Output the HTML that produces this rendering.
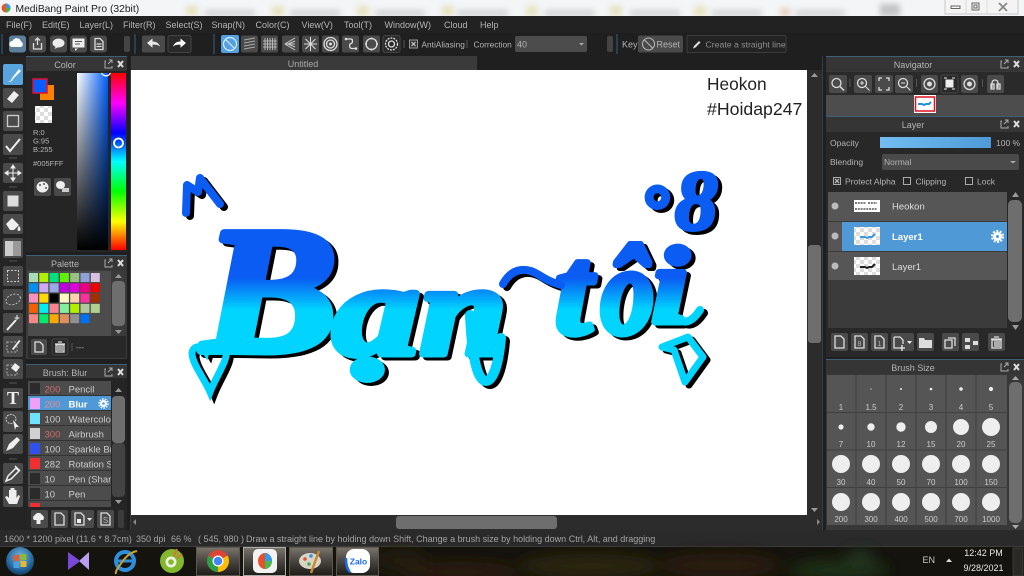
<!DOCTYPE html>
<html><head><meta charset="utf-8"><title>MediBang Paint Pro</title>
<style>
html,body{margin:0;padding:0;width:1024px;height:576px;overflow:hidden;background:#1f1f1f}
svg{display:block}
svg.root{filter:blur(.35px)}
text{font-family:"Liberation Sans",sans-serif;font-size:9px;fill:#b4b4b4}
.c{text-anchor:middle}
.b{fill:#4a4a4a}
.ic{fill:none;stroke:#ddd;stroke-width:1.3}
.f{fill:#ddd}
text.art{font-family:"Liberation Serif",serif;font-weight:bold;font-style:italic}
text.k{fill:#000;stroke:#000;stroke-width:7;stroke-linejoin:round}
text.g{fill:url(#gr);stroke:url(#gr);stroke-width:7;stroke-linejoin:round}
</style></head><body>
<svg class="root" width="1024" height="576" viewBox="0 0 1024 576" xmlns="http://www.w3.org/2000/svg">
<defs>
<linearGradient id="gr" gradientUnits="userSpaceOnUse" x1="0" y1="278" x2="0" y2="310"><stop offset="0" stop-color="#0a5cf2"/><stop offset="1" stop-color="#00d4ff"/></linearGradient>
<linearGradient id="sv1" x1="0" x2="1" y1="0" y2="0"><stop offset="0" stop-color="#fff"/><stop offset="1" stop-color="#005fff"/></linearGradient>
<linearGradient id="sv2" x1="0" x2="0" y1="0" y2="1"><stop offset="0" stop-color="#000" stop-opacity="0"/><stop offset="1" stop-color="#000"/></linearGradient>
<linearGradient id="hue" x1="0" x2="0" y1="0" y2="1"><stop offset="0" stop-color="#f00"/><stop offset=".17" stop-color="#f0f"/><stop offset=".34" stop-color="#00f"/><stop offset=".5" stop-color="#0ff"/><stop offset=".67" stop-color="#0f0"/><stop offset=".84" stop-color="#ff0"/><stop offset="1" stop-color="#f00"/></linearGradient>
<linearGradient id="op" x1="0" x2="1" y1="0" y2="0"><stop offset="0" stop-color="#72bdf2"/><stop offset="1" stop-color="#4f9ad6"/></linearGradient>
<linearGradient id="tb" x1="0" x2="0" y1="0" y2="1"><stop offset="0" stop-color="#7a746c"/><stop offset=".45" stop-color="#4c4842"/><stop offset="1" stop-color="#1e1c18"/></linearGradient>
<radialGradient id="orb" cx=".5" cy=".35" r=".7"><stop offset="0" stop-color="#7ab6dc"/><stop offset=".6" stop-color="#2a6ea4"/><stop offset="1" stop-color="#0c3458"/></radialGradient>
<pattern id="chk" width="8" height="8" patternUnits="userSpaceOnUse"><rect width="8" height="8" fill="#fff"/><rect width="4" height="4" fill="#ddd"/><rect x="4" y="4" width="4" height="4" fill="#ddd"/></pattern>
<filter id="bl" x="-30%" y="-30%" width="160%" height="160%"><feGaussianBlur stdDeviation="3"/></filter>
<filter id="bl2" x="-30%" y="-30%" width="160%" height="160%"><feGaussianBlur stdDeviation="7"/></filter>
</defs>

<!-- Title bar -->
<rect width="1024" height="16" fill="#f3f5f7"/>
<g filter="url(#bl)" opacity=".45"><rect x="186" y="6" width="12" height="10" fill="#d8cf80"/><rect x="272" y="6" width="12" height="10" fill="#d8cf80"/><rect x="357" y="6" width="12" height="10" fill="#d8cf80"/><rect x="442" y="6" width="12" height="10" fill="#d8cf80"/><rect x="526" y="6" width="12" height="10" fill="#d8cf80"/><rect x="610" y="6" width="12" height="10" fill="#d8cf80"/><rect x="694" y="6" width="12" height="10" fill="#d8cf80"/><rect x="780" y="8" width="10" height="8" fill="#e0a080"/><rect x="880" y="4" width="20" height="12" fill="#888"/><rect x="205" y="10" width="50" height="6" fill="#aaa"/><rect x="290" y="10" width="50" height="6" fill="#aaa"/><rect x="375" y="10" width="50" height="6" fill="#aaa"/><rect x="458" y="10" width="50" height="6" fill="#aaa"/><rect x="545" y="10" width="50" height="6" fill="#aaa"/><rect x="630" y="10" width="50" height="6" fill="#aaa"/><rect x="712" y="10" width="50" height="6" fill="#aaa"/><rect x="795" y="10" width="50" height="6" fill="#aaa"/></g>
<circle cx="6" cy="8" r="4.500" fill="#e8562a"/><path d="M6 3.500a4.500 4.500 0 0 1 4.500 4.500H6z" fill="#2f9ee8"/><path d="M6 8h4.500A4.500 4.500 0 0 1 6 12.500z" fill="#3fb34f"/>
<text x="15.500" y="12" style="font-size:10.300px;fill:#222">MediBang Paint Pro (32bit)</text>
<rect x="945" y="-1" width="73" height="15" fill="#f4f4f4" stroke="#c8c8c8"/><path d="M966 -1v15M987 -1v15" stroke="#ddd"/>
<rect x="951" y="6" width="9" height="2.500" fill="none" stroke="#666"/><rect x="972" y="3" width="7" height="7" fill="none" stroke="#666"/><rect x="974" y="5" width="3" height="3" fill="none" stroke="#666"/><path d="M999 3l8 8M1007 3l-8 8" stroke="#888" stroke-width="1.800"/>

<!-- Menu bar -->
<rect y="16" width="1024" height="17" fill="#222"/>
<g style="fill:#bbb"><text x="6" y="28">File(F)</text><text x="42" y="28">Edit(E)</text><text x="79.500" y="28">Layer(L)</text><text x="123" y="28">Filter(R)</text><text x="165.500" y="28">Select(S)</text><text x="211.500" y="28">Snap(N)</text><text x="255.500" y="28">Color(C)</text><text x="301.500" y="28">View(V)</text><text x="344" y="28">Tool(T)</text><text x="384.500" y="28">Window(W)</text><text x="444" y="28">Cloud</text><text x="480" y="28">Help</text></g>

<!-- Toolbar -->
<rect y="33" width="1024" height="22" fill="#1f1f1f"/>
<path d="M2 34v20M135 34v20M214 34v20M617 34v20" stroke="#2d4b63" stroke-width="1.500"/>
<rect x="9" y="35.500" width="17" height="17" rx="3" fill="#5d7f9c"/><path d="M12 47a3 3 0 0 1 .5-6 4.500 4.500 0 0 1 8.500.5 3 3 0 0 1 0 5.500z" fill="#fff"/>
<rect x="29" y="35.500" width="17" height="17" rx="3" class="b"/><path d="M33.500 43v6h8v-6M37.500 45v-7m-2.500 2.500l2.500-2.500 2.500 2.500" class="ic"/>
<rect x="50" y="35.500" width="17" height="17" rx="3" class="b"/><ellipse cx="58.500" cy="43" rx="6" ry="4.500" fill="#eee"/><path d="M56 46l-1.500 3 4-2z" fill="#eee"/>
<rect x="70" y="35.500" width="17" height="17" rx="3" class="b"/><rect x="72.500" y="38.500" width="12" height="9" fill="#eee"/><path d="M75 48.500l0 2.500 3-2.500z" fill="#eee"/><path d="M75 41.500h7M75 44h5" stroke="#555"/>
<rect x="90" y="35.500" width="17" height="17" rx="3" class="b"/><path d="M95 38.500h5l3 3v8h-8zM96.500 44h5M96.500 46.500h5" class="ic"/>
<rect x="124" y="36" width="6" height="16" rx="2" fill="#444"/>
<rect x="142" y="35.500" width="23" height="17" rx="2" class="b"/><path d="M147 43l5.500-4.500v3c4 0 6.500 2 7.500 5-2-1.500-4.500-2-7.500-1.800v3z" fill="#e8e8e8"/>
<rect x="168" y="35.500" width="23" height="17" rx="2" fill="#2a2a2a" stroke="#444"/><path d="M186 43l-5.500-4.500v3c-4 0-6.500 2-7.500 5 2-1.500 4.500-2 7.500-1.800v3z" fill="#fff"/>
<rect x="221" y="35" width="18" height="18" rx="2" fill="#55a0de"/><circle cx="230" cy="44" r="6.500" fill="none" stroke="#d8ecfa" stroke-width="1.200"/><path d="M225.500 39.500l9 9" stroke="#d8ecfa" stroke-width="1.200"/>
<rect x="241" y="35.500" width="17" height="17" rx="2" class="b"/><path d="M244 40l11-2M244 43l11-2M244 46l11-2M244 49l11-2" stroke="#aaa"/>
<rect x="261" y="35.500" width="17" height="17" rx="2" class="b"/><path d="M265 38v12M267.500 38v12M270 38v12M272.500 38v12M275 38v12M263 41h14M263 44h14M263 47h14" stroke="#ccc" stroke-width=".8"/>
<rect x="282" y="35.500" width="17" height="17" rx="2" class="b"/><path d="M295 38l-10 6 10 6M295 41l-7 3 7 3M295 44h-9" stroke="#ccc" fill="none"/>
<rect x="302" y="35.500" width="17" height="17" rx="2" class="b"/><path d="M310.500 37v14M304 44h13M305.500 39l10 10M315.500 39l-10 10" stroke="#ddd"/>
<rect x="322" y="35.500" width="17" height="17" rx="2" class="b"/><circle cx="330.500" cy="44" r="6.500" class="ic" stroke-width=".8"/><circle cx="330.500" cy="44" r="4" class="ic" stroke-width=".8"/><circle cx="330.500" cy="44" r="1.500" class="f"/>
<rect x="342" y="35.500" width="17" height="17" rx="2" class="b"/><path d="M346 39h5c2 0 2 4 0 4.500s-2 5 1 5h4" class="ic"/><circle cx="346" cy="39" r="1.300" class="f"/><circle cx="356" cy="48.500" r="1.300" class="f"/>
<rect x="363" y="35.500" width="17" height="17" rx="2" class="b"/><circle cx="371.500" cy="44" r="5.500" class="ic" stroke-width="1.600"/><circle cx="371.500" cy="38.500" r="1" class="f"/><circle cx="371.500" cy="49.500" r="1" class="f"/><circle cx="366" cy="44" r="1" class="f"/><circle cx="377" cy="44" r="1" class="f"/>
<rect x="383" y="35.500" width="17" height="17" rx="2" fill="#2a2a2a" stroke="#444"/><circle cx="391.500" cy="44" r="6" class="ic" stroke-dasharray="2 1" stroke-width="1.600"/><circle cx="391.500" cy="44" r="3" class="ic" stroke-width=".9"/>
<path d="M404 40v8M467 40v8" stroke="#555"/>
<rect x="409.500" y="40" width="8" height="8" fill="#333" stroke="#999"/><path d="M411.500 42l4 4M415.500 42l-4 4" stroke="#ccc" stroke-width="1.200"/>
<text x="421.500" y="47.500" style="font-size:8.300px">AntiAliasing</text><text x="473.500" y="47.500" style="font-size:8.300px">Correction</text>
<rect x="515" y="36" width="72" height="16" rx="2" fill="#4c4c4c"/><text x="517" y="47.500">40</text><path d="M579 43h5l-2.500 2.500z" fill="#aaa"/>
<rect x="607" y="36" width="6" height="16" rx="2" fill="#444"/>
<text x="622" y="47.500">Key</text>
<rect x="638" y="35.500" width="45" height="17" rx="2" class="b"/><circle cx="648.500" cy="44" r="6" fill="none" stroke="#bbb"/><path d="M644.500 40l8 8" stroke="#bbb"/><text x="656.500" y="47.500">Reset</text>
<rect x="687" y="35.500" width="99" height="17" rx="1" fill="#232323" stroke="#3c3c3c"/><path d="M693 48.500l1-2.500 5-5 1.500 1.500-5 5z" fill="#ddd"/><text x="705.500" y="47.500" style="fill:#8e8e8e;font-size:8.700px">Create a straight line</text>

<!-- Canvas area -->
<rect x="131" y="56" width="346" height="14" fill="#3a3a3a"/>
<text x="303" y="67" class="c" style="fill:#aaa">Untitled</text>
<rect x="131" y="70" width="676" height="445" fill="#fff"/>
<rect x="131" y="515" width="691" height="15" fill="#2c2c2c"/>
<rect x="396" y="516" width="161" height="13" rx="3" fill="#6e6e6e"/>
<path d="M136 519v6l-3-3zM817 519v6l3-3z" fill="#888"/>
<rect x="807" y="70" width="15" height="445" fill="#2c2c2c"/>
<rect x="808" y="245" width="13" height="98" rx="3" fill="#6e6e6e"/>
<path d="M811 77h7l-3.500 -4zM811 508h7l-3.500 4z" fill="#999"/>
<rect x="130" y="70" width="1" height="460" fill="#2d4050"/>
<rect x="822" y="56" width="1" height="474" fill="#2d4050"/>

<!-- Artwork -->
<text x="707" y="90" style="font-size:17.300px;fill:#222">Heokon</text>
<text x="707" y="115" style="font-size:17.700px;fill:#222">#Hoidap247</text>

<g transform="translate(4 3)">
<text class="art k" transform="translate(203 0) scale(1.120 1)" y="351" style="font-size:180px;stroke-width:8px">B</text>
<text class="art k" transform="translate(333 0) scale(1.330 1)" y="354" style="font-size:130px">ạ</text>
<text class="art k" transform="translate(420 0) scale(1.200 1)" y="354" style="font-size:130px">n</text>
<path d="M470 315C472 360 478 381 486 381S499 360 501 338" fill="none" stroke="#000" stroke-width="10" stroke-linecap="round"/>
<text class="art k" transform="translate(555 0) scale(1.050 1)" y="333" style="font-size:125px">t</text>
<text class="art k" transform="translate(601 0) scale(.850 1)" y="333" style="font-size:125px">ô</text>
<text class="art k" transform="translate(652 0) scale(1.200 1)" y="322" style="font-size:108px">i</text>
<path d="M678 318q10 10 22-8" fill="none" stroke="#000" stroke-width="8" stroke-linecap="round"/>
<path d="M503 284c10-18 25-16 36-9s16 8 22 10" fill="none" stroke="#000" stroke-width="8" stroke-linecap="round"/>
<text class="art k" x="675" y="229" style="font-size:85px;stroke-width:4px">8</text>
<text class="art k" x="641" y="232" style="font-size:68px;stroke-width:5px">°</text>
<path d="M186 213L187 185L198 192L200 178L220 204" fill="none" stroke="#000" stroke-width="8" stroke-linecap="round" stroke-linejoin="round"/>
<path d="M210 392c-6-14-17-27-18-38 0-8 9-10 14-2 2-7 14-10 19-4 6 8-9 28-15 44z" fill="none" stroke="#000" stroke-width="7"/>
<path d="M662 347L688 337L703 357L685 382L674 350z" fill="none" stroke="#000" stroke-width="7" stroke-linejoin="round"/>
</g>
<text class="art g" transform="translate(203 0) scale(1.120 1)" y="351" style="font-size:180px;stroke-width:8px">B</text>
<text class="art g" transform="translate(333 0) scale(1.330 1)" y="354" style="font-size:130px">ạ</text>
<text class="art g" transform="translate(420 0) scale(1.200 1)" y="354" style="font-size:130px">n</text>
<path d="M470 315C472 360 478 381 486 381S499 360 501 338" fill="none" stroke="#00d4ff" stroke-width="10" stroke-linecap="round"/>
<text class="art g" transform="translate(555 0) scale(1.050 1)" y="333" style="font-size:125px">t</text>
<text class="art g" transform="translate(601 0) scale(.850 1)" y="333" style="font-size:125px">ô</text>
<text class="art g" transform="translate(652 0) scale(1.200 1)" y="322" style="font-size:108px">i</text>
<path d="M678 318q10 10 22-8" fill="none" stroke="#00d4ff" stroke-width="8" stroke-linecap="round"/>
<path d="M503 284c10-18 25-16 36-9s16 8 22 10" fill="none" stroke="#0a5cf2" stroke-width="8" stroke-linecap="round"/>
<text class="art" x="675" y="229" style="font-size:85px;fill:#0a5cf2;stroke:#0a5cf2;stroke-width:4px">8</text>
<text class="art" x="641" y="232" style="font-size:68px;fill:#0a5cf2;stroke:#0a5cf2;stroke-width:5px">°</text>
<path d="M186 213L187 185L198 192L200 178L220 204" fill="none" stroke="#0a5cf2" stroke-width="8" stroke-linecap="round" stroke-linejoin="round"/>
<path d="M210 392c-6-14-17-27-18-38 0-8 9-10 14-2 2-7 14-10 19-4 6 8-9 28-15 44z" fill="none" stroke="#00d4ff" stroke-width="7"/>
<path d="M662 347L688 337L703 357L685 382L674 350z" fill="none" stroke="#00d4ff" stroke-width="7" stroke-linejoin="round"/>

<!-- Left tools -->
<rect x="0" y="56" width="26" height="474" fill="#242424"/>
<rect x="3" y="64" width="20" height="21" rx="2" fill="#5aa4de"/><path d="M6 82c4 0 5-1 6-4l7-9 2 2-8 8c-1 3-3 3-7 3z" fill="#fff"/>
<rect x="3" y="88" width="20" height="20" rx="2" class="b"/><path d="M7 99l7-8 5 4-7 8z" fill="#eee"/>
<rect x="3" y="111" width="20" height="20" rx="2" class="b"/><rect x="7.500" y="115.500" width="11" height="11" fill="none" stroke="#ccc" stroke-width="1.300"/>
<rect x="3" y="134" width="20" height="21" rx="2" class="b"/><path d="M6 146l4 5 10-12" fill="none" stroke="#eee" stroke-width="2"/>
<path d="M9 158h8M9 187h8M9 261h8M9 383h8M9 459h8" stroke="#555"/>
<rect x="3" y="163" width="20" height="20" rx="2" class="b"/><path d="M13 165v16M5 173h16M13 165l-2 3h4zM13 181l-2-3h4zM5 173l3-2v4zM21 173l-3-2v4z" stroke="#eee" fill="#eee"/>
<rect x="3" y="191" width="20" height="20" rx="2" class="b"/><rect x="7.500" y="195.500" width="11" height="11" fill="#ddd"/>
<rect x="3" y="214" width="20" height="20" rx="2" class="b"/><path d="M6 224l6-6 7 7-5 5h-4zM19 226c2 2 2 5 0 5s-2-3 0-5z" fill="#eee"/>
<rect x="3" y="238" width="20" height="20" rx="2" class="b"/><rect x="5" y="241" width="16" height="15" fill="#999"/><rect x="5" y="241" width="8" height="15" fill="#ccc"/>
<rect x="3" y="266" width="20" height="20" rx="2" class="b"/><rect x="7.500" y="270.500" width="11" height="11" fill="none" stroke="#ccc" stroke-dasharray="2 1.500"/>
<rect x="3" y="289" width="20" height="21" rx="2" class="b"/><ellipse cx="13" cy="299.500" rx="7.500" ry="5" fill="none" stroke="#bbb" stroke-dasharray="2 1.500" transform="rotate(-20 13 299)"/>
<rect x="3" y="313" width="20" height="20" rx="2" class="b"/><path d="M7 330l9-10" stroke="#eee" stroke-width="2"/><path d="M17 315v5M14.500 318h5" stroke="#eee"/>
<rect x="3" y="336" width="20" height="21" rx="2" class="b"/><rect x="7" y="342" width="10" height="10" fill="none" stroke="#aaa" stroke-dasharray="2 1.500"/><path d="M12 349l7-9 1.500 1-7 9z" fill="#eee"/>
<rect x="3" y="359" width="20" height="20" rx="2" class="b"/><rect x="7" y="365" width="10" height="10" fill="none" stroke="#aaa" stroke-dasharray="2 1.500"/><path d="M11 368l4-5 5 4-4 5z" fill="#eee"/>
<rect x="3" y="388" width="20" height="20" rx="2" class="b"/><text x="13" y="404" class="c" style="font-family:'Liberation Serif',serif;font-weight:bold;font-size:18px;fill:#eee">T</text>
<rect x="3" y="411" width="20" height="21" rx="2" class="b"/><ellipse cx="11" cy="419" rx="5" ry="4.500" fill="none" stroke="#ccc" stroke-dasharray="2 1"/><path d="M13 420l6 7-3 0-1 3z" fill="#eee"/>
<rect x="3" y="434" width="20" height="20" rx="2" class="b"/><path d="M6 451l3-7 8-7 3 3-7 8z" fill="#eee"/>
<rect x="3" y="463" width="20" height="21" rx="2" class="b"/><path d="M6 481l2-5 8-8 3 3-8 8zM15 466l5 5" fill="none" stroke="#eee" stroke-width="1.500"/>
<rect x="3" y="486" width="20" height="21" rx="2" class="b"/><path d="M9 504l-4-7 2-1 2 2v-8h1.500v6-8h2v8-8h2v8-6h2v8l2-3 1.500 1-3 8z" fill="#eee"/>

<!-- Color panel -->
<rect x="26" y="56" width="101" height="196" fill="#252525"/>
<rect x="26" y="56" width="101" height="1" fill="#3f5f78"/>
<rect x="26" y="57" width="101" height="14" fill="#363636"/>
<text x="65" y="68" class="c">Color</text>
<path d="M106 61h-1v7h7v-2M109 60h3v3M112 60l-4 4" fill="none" stroke="#aaa"/><path d="M118 61l5 6M123 61l-5 6" stroke="#ddd" stroke-width="2"/>
<rect x="40" y="85" width="14" height="15" fill="#f98200"/>
<rect x="33" y="79" width="14" height="14" fill="#0a5cff" stroke="#e01030" stroke-width="1.500"/>
<rect x="35" y="106" width="17" height="17" fill="url(#chk)"/>
<text x="33" y="135" style="font-size:7.500px">R:0</text><text x="33" y="143.500" style="font-size:7.500px">G:95</text><text x="33" y="152" style="font-size:7.500px">B:255</text>
<text x="33" y="166" style="font-size:7.500px">#005FFF</text>
<rect x="34" y="178" width="17" height="18" rx="2" class="b"/><ellipse cx="42.500" cy="187" rx="6" ry="5.500" fill="#eee"/><circle cx="40" cy="185" r="1" fill="#555"/><circle cx="44" cy="184" r="1" fill="#555"/><circle cx="46" cy="188" r="1" fill="#555"/>
<rect x="54" y="178" width="17" height="18" rx="2" class="b"/><ellipse cx="60.500" cy="185" rx="4.500" ry="4" fill="#eee"/><rect x="62" y="188" width="7" height="4" fill="#ccc"/>
<rect x="77" y="73" width="31" height="177" fill="url(#sv1)"/><rect x="77" y="73" width="31" height="177" fill="url(#sv2)"/>
<path d="M101.500 73a5 5 0 0 0 9 0" fill="none" stroke="#fff" stroke-width="1.300"/>
<rect x="111" y="73" width="15" height="177" fill="url(#hue)"/>
<circle cx="118.500" cy="143" r="4.500" fill="none" stroke="#fff" stroke-width="1.800"/><circle cx="118.500" cy="143" r="6" fill="none" stroke="#1a3a80" stroke-width=".5"/>

<!-- Palette panel -->
<rect x="26" y="255" width="101" height="104" fill="#3a3a3a"/>
<rect x="26" y="255" width="101" height="1" fill="#3f5f78"/>
<rect x="26" y="256" width="101" height="14" fill="#363636"/>
<text x="65" y="267" class="c">Palette</text>
<path d="M106 260h-1v7h7v-2M109 259h3v3M112 259l-4 4" fill="none" stroke="#aaa"/><path d="M118 260l5 6M123 260l-5 6" stroke="#ddd" stroke-width="2"/>
<rect x="28" y="271" width="83" height="65" fill="#4c4c4c"/>
<g>
<rect x="29" y="273" width="9" height="9" fill="#a8dcb8"/><rect x="39.300" y="273" width="9" height="9" fill="#b0f000"/><rect x="49.600" y="273" width="9" height="9" fill="#00e080"/><rect x="59.900" y="273" width="9" height="9" fill="#60f000"/><rect x="70.200" y="273" width="9" height="9" fill="#98c080"/><rect x="80.500" y="273" width="9" height="9" fill="#90a0d8"/><rect x="90.800" y="273" width="9" height="9" fill="#d8c0e0"/>
<rect x="29" y="283.300" width="9" height="9" fill="#0090f0"/><rect x="39.300" y="283.300" width="9" height="9" fill="#d0a8f0"/><rect x="49.600" y="283.300" width="9" height="9" fill="#98a8e8"/><rect x="59.900" y="283.300" width="9" height="9" fill="#c000e0"/><rect x="70.200" y="283.300" width="9" height="9" fill="#e000e0"/><rect x="80.500" y="283.300" width="9" height="9" fill="#f00080"/><rect x="90.800" y="283.300" width="9" height="9" fill="#f00000"/>
<rect x="29" y="293.600" width="9" height="9" fill="#f890c0"/><rect x="39.300" y="293.600" width="9" height="9" fill="#ffd800"/><rect x="49.600" y="293.600" width="9" height="9" fill="#000"/><rect x="59.900" y="293.600" width="9" height="9" fill="#fff8c0"/><rect x="70.200" y="293.600" width="9" height="9" fill="#ffd0b0"/><rect x="80.500" y="293.600" width="9" height="9" fill="#f830a0"/><rect x="90.800" y="293.600" width="9" height="9" fill="#a03000"/>
<rect x="29" y="303.900" width="9" height="9" fill="#f06000"/><rect x="39.300" y="303.900" width="9" height="9" fill="#00f0f0"/><rect x="49.600" y="303.900" width="9" height="9" fill="#f88090"/><rect x="59.900" y="303.900" width="9" height="9" fill="#80f0a0"/><rect x="70.200" y="303.900" width="9" height="9" fill="#b0f000"/><rect x="80.500" y="303.900" width="9" height="9" fill="#b0c8a0"/><rect x="90.800" y="303.900" width="9" height="9" fill="#b0d090"/>
<rect x="29" y="314.200" width="9" height="9" fill="#f88888"/><rect x="39.300" y="314.200" width="9" height="9" fill="#00e870"/><rect x="49.600" y="314.200" width="9" height="9" fill="#f8a800"/><rect x="59.900" y="314.200" width="9" height="9" fill="#e09060"/><rect x="70.200" y="314.200" width="9" height="9" fill="#909090"/><rect x="80.500" y="314.200" width="9" height="9" fill="#0070f0"/>
</g>
<rect x="112" y="281" width="13" height="45" rx="4" fill="#6e6e6e"/><path d="M115 278h7l-3.500-4zM115 330h7l-3.500 4z" fill="#999"/>
<rect x="28" y="336" width="98" height="22" fill="#282828"/>
<rect x="31" y="339" width="16" height="16" rx="2" class="b"/><path d="M35 342h5l3 3v7h-8z" class="ic"/>
<rect x="52" y="339" width="16" height="16" rx="2" fill="#2a2a2a" stroke="#444"/><path d="M56 345h8v7h-8zM55 344h10M58 342h4M58 346v5M60 346v5M62 346v5" class="ic" stroke-width=".9"/>
<text x="76" y="350" style="font-size:8px">---</text><path d="M72 343v8" stroke="#555"/>

<!-- Brush panel -->
<rect x="26" y="364" width="101" height="166" fill="#252525"/>
<rect x="26" y="364" width="101" height="1" fill="#3f5f78"/>
<rect x="26" y="365" width="101" height="13" fill="#363636"/>
<text x="65" y="376" class="c">Brush: Blur</text>
<path d="M106 369h-1v7h7v-2M109 368h3v3M112 368l-4 4" fill="none" stroke="#aaa"/><path d="M118 369l5 6M123 369l-5 6" stroke="#ddd" stroke-width="2"/>
<rect x="28" y="381" width="83" height="126" fill="#4c4c4c"/>
<rect x="28" y="396" width="83" height="15" fill="#4f9ad6"/>
<path d="M28 395.500h83M28 410.500h83M28 425.500h83M28 440.500h83M28 455.500h83M28 470.500h83M28 485.500h83M28 500.500h83" stroke="#333"/>
<svg x="28" y="381" width="83" height="126" viewBox="28 381 83 126">
<rect x="30" y="383" width="10" height="11" fill="#2b2b2b"/><text x="44.500" y="392.500" style="fill:#d06868;font-size:9.500px">200</text><text x="68.500" y="392.500" style="font-size:9.500px;fill:#ccc">Pencil</text>
<rect x="30" y="398" width="10" height="11" fill="#f0a0f8"/><text x="44.500" y="407.500" style="fill:#e88a8a;font-size:9.500px">200</text><text x="68.500" y="407.500" style="font-size:9.500px;fill:#fff;font-weight:bold">Blur</text>
<rect x="30" y="413" width="10" height="11" fill="#70e0ff"/><text x="44.500" y="422.500" style="font-size:9.500px;fill:#ccc">100</text><text x="68.500" y="422.500" style="font-size:9.500px;fill:#ccc">Watercolor</text>
<rect x="30" y="428" width="10" height="11" fill="#d0d0d0"/><text x="44.500" y="437.500" style="fill:#d06868;font-size:9.500px">300</text><text x="68.500" y="437.500" style="font-size:9.500px;fill:#ccc">Airbrush</text>
<rect x="30" y="443" width="10" height="11" fill="#3050f0"/><text x="44.500" y="452.500" style="font-size:9.500px;fill:#ccc">100</text><text x="68.500" y="452.500" style="font-size:9.500px;fill:#ccc">Sparkle Brush</text>
<rect x="30" y="458" width="10" height="11" fill="#f03030"/><text x="44.500" y="467.500" style="font-size:9.500px;fill:#ccc">282</text><text x="68.500" y="467.500" style="font-size:9.500px;fill:#ccc">Rotation Sym</text>
<rect x="30" y="473" width="10" height="11" fill="#2b2b2b"/><text x="44.500" y="482.500" style="font-size:9.500px;fill:#ccc">10</text><text x="68.500" y="482.500" style="font-size:9.500px;fill:#ccc">Pen (Sharp)</text>
<rect x="30" y="488" width="10" height="11" fill="#2b2b2b"/><text x="44.500" y="497.500" style="font-size:9.500px;fill:#ccc">10</text><text x="68.500" y="497.500" style="font-size:9.500px;fill:#ccc">Pen</text>
<rect x="30" y="503" width="10" height="4" fill="#f03030"/>
</svg>
<circle cx="103.500" cy="403.500" r="3.500" fill="#fff"/><circle cx="103.500" cy="403.500" r="4.500" fill="none" stroke="#fff" stroke-dasharray="1.500 1.300" stroke-width="1.500"/><circle cx="103.500" cy="403.500" r="1.300" fill="#4f9ad6"/>
<rect x="112" y="396" width="13" height="47" rx="4" fill="#6e6e6e"/><rect x="112" y="443" width="13" height="54" rx="4" fill="#444"/><path d="M115 392h7l-3.500-4zM115 500h7l-3.500 4z" fill="#999"/>
<rect x="31" y="510" width="17" height="18" rx="2" class="b"/><path d="M34 520a3 3 0 0 1 1-5 4 4 0 0 1 7 0 3 3 0 0 1 1 5z" fill="#eee"/><path d="M36.500 520h4v4h-4z" fill="#eee"/>
<rect x="51" y="510" width="17" height="18" rx="2" class="b"/><path d="M55 513h6l3 3v9h-9z" class="ic"/>
<rect x="71" y="510" width="23" height="18" rx="2" class="b"/><path d="M75 513h6l3 3v9h-9z" class="ic"/><rect x="77" y="519" width="4" height="4" fill="#eee"/><path d="M87 518h5l-2.500 3z" fill="#eee"/>
<rect x="97" y="510" width="17" height="18" rx="2" class="b"/><path d="M101 513h6l3 3v9h-9z" class="ic" stroke="#aaa"/><text x="105.500" y="523" class="c" style="font-size:8px">S</text>
<rect x="118" y="510" width="6" height="18" rx="2" fill="#3c3c3c"/>

<!-- Navigator -->
<rect x="826" y="56" width="198" height="60" fill="#383838"/>
<rect x="826" y="56" width="198" height="1" fill="#3f5f78"/>
<rect x="826" y="57" width="198" height="14" fill="#353535"/>
<text x="913" y="68" class="c">Navigator</text>
<path d="M1002 61h-1v7h7v-2M1005 60h3v3M1008 60l-4 4" fill="none" stroke="#aaa"/><path d="M1014 61l5 6M1019 61l-5 6" stroke="#ddd" stroke-width="2"/>
<rect x="826" y="72" width="198" height="23" fill="#2a2a2a"/>
<rect x="829" y="75" width="18" height="18" rx="2" class="b"/><circle cx="836.500" cy="83" r="4.500" class="ic"/><path d="M840 86.500l4 4" stroke="#ddd" stroke-width="1.500"/>
<rect x="854" y="75" width="18" height="18" rx="2" class="b"/><circle cx="862" cy="83" r="4.500" class="ic"/><path d="M865.500 86.500l4 4M860 83h4M862 81v4" stroke="#ddd"/>
<rect x="875" y="75" width="18" height="18" rx="2" class="b"/><path d="M879 81v-3h3M889 81v-3h-3M879 87v3h3M889 87v3h-3" class="ic"/>
<rect x="895" y="75" width="18" height="18" rx="2" class="b"/><circle cx="903" cy="83" r="4.500" class="ic"/><path d="M906.500 86.500l4 4M901 83h4" stroke="#ddd"/>
<rect x="921" y="75" width="17" height="18" rx="2" class="b"/><circle cx="929.500" cy="84" r="5.500" class="ic" stroke-width="1.800"/><circle cx="929.500" cy="84" r="2.500" class="f"/>
<rect x="941" y="75" width="17" height="18" rx="2" fill="#2a2a2a" stroke="#444"/><rect x="945.500" y="79.500" width="8" height="8" fill="#eee"/><path d="M944 78h3M952 78h3M944 89h3M952 89h3" stroke="#eee"/>
<rect x="961" y="75" width="17" height="18" rx="2" class="b"/><circle cx="969.500" cy="84" r="5.500" class="ic" stroke-width="1.800"/><circle cx="969.500" cy="84" r="2.500" class="f"/>
<rect x="987" y="75" width="17" height="18" rx="2" class="b"/><path d="M992 88v-5a3 3 0 0 1 6 0v5M991 84h3v5h-3zM997 84h3v5h-3z" class="ic" stroke-width="1"/>
<path d="M850 79v8M916.500 79v8M982.500 79v8" stroke="#555"/>
<rect x="826" y="95" width="198" height="21" fill="#4d4d4d"/>
<rect x="914" y="95" width="22" height="18" fill="#fff"/><rect x="915.500" y="97" width="19" height="14" fill="#fff" stroke="#e01020" stroke-width="1.500"/><path d="M918 104h4l2 1 2-1h3l2-2" stroke="#2090e0" stroke-width="2" fill="none"/>

<!-- Layer -->
<rect x="826" y="116" width="198" height="1" fill="#3f5f78"/>
<rect x="826" y="117" width="198" height="240" fill="#282828"/>
<rect x="826" y="117" width="198" height="15" fill="#353535"/>
<text x="913" y="128" class="c">Layer</text>
<path d="M1002 121h-1v7h7v-2M1005 120h3v3M1008 120l-4 4" fill="none" stroke="#aaa"/><path d="M1014 121l5 6M1019 121l-5 6" stroke="#ddd" stroke-width="2"/>
<text x="830" y="146" style="font-size:8.500px">Opacity</text>
<rect x="880" y="137" width="111" height="11" fill="url(#op)"/>
<text x="996" y="146" style="font-size:8.500px">100 %</text>
<text x="830" y="165" style="font-size:8.500px">Blending</text>
<rect x="882" y="154" width="137" height="16" rx="2" fill="#4a4a4a"/><text x="884" y="165" style="font-size:8.500px">Normal</text><path d="M1010 161h6l-3 2.500z" fill="#aaa"/>
<rect x="833.500" y="177.500" width="7" height="7" fill="#333" stroke="#aaa"/><path d="M835 179l4 4M839 179l-4 4" stroke="#ccc"/>
<text x="845" y="184.500" style="font-size:8.500px">Protect Alpha</text>
<rect x="903.500" y="177.500" width="7" height="7" fill="none" stroke="#aaa"/><text x="915.500" y="184.500" style="font-size:8.500px">Clipping</text>
<rect x="965.500" y="177.500" width="7" height="7" fill="none" stroke="#aaa"/><text x="977" y="184.500" style="font-size:8.500px">Lock</text>
<rect x="828" y="192" width="179" height="136" fill="#3b3b3b"/>
<rect x="828" y="192" width="179" height="29" fill="#565656"/>
<rect x="828" y="222" width="14" height="29" fill="#565656"/>
<rect x="842" y="222" width="165" height="29" fill="#4f9ad6"/>
<rect x="828" y="252" width="179" height="28" fill="#565656"/>
<circle cx="835" cy="206" r="3.500" fill="#bbb"/><circle cx="835" cy="236" r="3.500" fill="#bbb"/><circle cx="835" cy="266" r="3.500" fill="#bbb"/>
<rect x="854" y="200" width="26" height="12" fill="#fff"/><path d="M855 203h11M868 203h9M855 209h22" stroke="#555" stroke-width="1.500" stroke-dasharray="2 .8"/>
<rect x="854" y="227" width="26" height="18" fill="url(#chk)"/><path d="M860 237h5l2 1 2-1h3l3-3" stroke="#3a9ae0" stroke-width="2" fill="none"/>
<rect x="854" y="257" width="26" height="18" fill="url(#chk)"/><path d="M860 267h5l2 1 2-1h3l3-3" stroke="#222" stroke-width="2" fill="none"/>
<text x="892" y="209.500" style="font-size:9.500px;fill:#ddd">Heokon</text>
<text x="892" y="240" style="font-size:9.500px;font-weight:bold;fill:#fff">Layer1</text>
<text x="892" y="270" style="font-size:9.500px;fill:#ddd">Layer1</text>
<circle cx="997.500" cy="236.500" r="4.500" fill="#fff"/><circle cx="997.500" cy="236.500" r="5.500" fill="none" stroke="#fff" stroke-dasharray="2 1.500" stroke-width="2"/><circle cx="997.500" cy="236.500" r="1.500" fill="#4f9ad6"/>
<rect x="1008" y="200" width="14" height="122" rx="5" fill="#6e6e6e"/><path d="M1012 197h7l-3.500-5zM1012 325h7l-3.500 5z" fill="#999"/>
<rect x="831" y="333" width="17" height="18" rx="2" class="b"/><path d="M835 336h6l3 3v9h-9z" class="ic"/>
<rect x="851" y="333" width="17" height="18" rx="2" class="b"/><path d="M855 336h6l3 3v9h-9z" class="ic" stroke="#aaa"/><text x="859.500" y="346" class="c" style="font-size:7px">8</text>
<rect x="871" y="333" width="17" height="18" rx="2" class="b"/><path d="M875 336h6l3 3v9h-9z" class="ic" stroke="#aaa"/><text x="879.500" y="346" class="c" style="font-size:7px">1</text>
<rect x="891" y="333" width="23" height="18" rx="2" class="b"/><path d="M894 337h6l3 3v4M899 348h-5v-11" class="ic"/><path d="M902 345v6M899 348h6" stroke="#eee" stroke-width="1.300"/><path d="M907 341h5l-2.500 3z" fill="#eee"/>
<rect x="917" y="333" width="17" height="18" rx="2" class="b"/><path d="M919 338h5l1 2h7v8h-13z" fill="#ddd"/>
<rect x="942" y="333" width="17" height="18" rx="2" class="b"/><path d="M948 338h7v8M945 340h7v8h-7z" class="ic"/>
<rect x="962" y="333" width="17" height="18" rx="2" class="b"/><path d="M965 338h5v4h-5zM965 345h5v4h-5zM973 341h5v4h-5z" class="f"/>
<rect x="988" y="333" width="17" height="18" rx="2" class="b"/><path d="M992 340h9v8h-9zM991 339h11M994 337h5M995 341v6M997 341v6M999 341v6" class="ic" stroke-width=".9"/>

<!-- Brush size -->
<rect x="826" y="360" width="198" height="170" fill="#383838"/>
<rect x="826" y="359" width="198" height="1" fill="#3f5f78"/>
<rect x="826" y="360" width="198" height="14" fill="#353535"/>
<text x="913" y="371" class="c">Brush Size</text>
<path d="M1002 364h-1v7h7v-2M1005 363h3v3M1008 363l-4 4" fill="none" stroke="#aaa"/><path d="M1014 364l5 6M1019 364l-5 6" stroke="#ddd" stroke-width="2"/>
<rect x="827" y="375" width="180" height="150" fill="#555"/>
<path d="M827 412.500h180M827 450h180M827 487.500h180M856 375v150M886 375v150M916 375v150M946 375v150M976 375v150" stroke="#3f3f3f"/>
<g fill="#eee">
<circle cx="871" cy="389" r=".6"/><circle cx="901" cy="389" r="1"/><circle cx="931" cy="389" r="1.300"/><circle cx="961" cy="389" r="1.800"/><circle cx="991" cy="389" r="2.100"/>
<circle cx="841" cy="427" r="2.600"/><circle cx="871" cy="427" r="3.700"/><circle cx="901" cy="427" r="4.700"/><circle cx="931" cy="427" r="6"/><circle cx="961" cy="427" r="8"/><circle cx="991" cy="427" r="9"/>
<circle cx="841" cy="464" r="9"/><circle cx="871" cy="464" r="9"/><circle cx="901" cy="464" r="9"/><circle cx="931" cy="464" r="9"/><circle cx="961" cy="464" r="9"/><circle cx="991" cy="464" r="9"/>
<circle cx="841" cy="502" r="9"/><circle cx="871" cy="502" r="9"/><circle cx="901" cy="502" r="9"/><circle cx="931" cy="502" r="9"/><circle cx="961" cy="502" r="9"/><circle cx="991" cy="502" r="9"/>
</g>
<g>
<text x="841" y="410" class="c" style="fill:#ccc;font-size:8px">1</text><text x="871" y="410" class="c" style="fill:#ccc;font-size:8px">1.5</text><text x="901" y="410" class="c" style="fill:#ccc;font-size:8px">2</text><text x="931" y="410" class="c" style="fill:#ccc;font-size:8px">3</text><text x="961" y="410" class="c" style="fill:#ccc;font-size:8px">4</text><text x="991" y="410" class="c" style="fill:#ccc;font-size:8px">5</text>
<text x="841" y="447" class="c" style="fill:#ccc;font-size:8px">7</text><text x="871" y="447" class="c" style="fill:#ccc;font-size:8px">10</text><text x="901" y="447" class="c" style="fill:#ccc;font-size:8px">12</text><text x="931" y="447" class="c" style="fill:#ccc;font-size:8px">15</text><text x="961" y="447" class="c" style="fill:#ccc;font-size:8px">20</text><text x="991" y="447" class="c" style="fill:#ccc;font-size:8px">25</text>
<text x="841" y="485" class="c" style="fill:#ccc;font-size:8px">30</text><text x="871" y="485" class="c" style="fill:#ccc;font-size:8px">40</text><text x="901" y="485" class="c" style="fill:#ccc;font-size:8px">50</text><text x="931" y="485" class="c" style="fill:#ccc;font-size:8px">70</text><text x="961" y="485" class="c" style="fill:#ccc;font-size:8px">100</text><text x="991" y="485" class="c" style="fill:#ccc;font-size:8px">150</text>
<text x="841" y="522" class="c" style="fill:#ccc;font-size:8px">200</text><text x="871" y="522" class="c" style="fill:#ccc;font-size:8px">300</text><text x="901" y="522" class="c" style="fill:#ccc;font-size:8px">400</text><text x="931" y="522" class="c" style="fill:#ccc;font-size:8px">500</text><text x="961" y="522" class="c" style="fill:#ccc;font-size:8px">700</text><text x="991" y="522" class="c" style="fill:#ccc;font-size:8px">1000</text>
</g>
<rect x="1009" y="382" width="13" height="141" rx="5" fill="#6e6e6e"/><path d="M1012 380h7l-3.500-4zM1012 525h7l-3.500 4z" fill="#aaa"/>

<!-- Status bar -->
<rect y="530" width="1024" height="17" fill="#2a2a2a"/>
<path d="M0 547h1024" stroke="#777" stroke-width=".6"/>
<text x="4" y="542" style="fill:#a4a4a4">1600 * 1200 pixel</text><text x="76" y="542" style="fill:#a4a4a4">(11.6 * 8.7cm)</text><text x="136" y="542" style="fill:#a4a4a4">350 dpi</text><text x="171" y="542" style="fill:#a4a4a4">66 %</text><text x="198" y="542" style="fill:#a4a4a4">( 545, 980 )</text><text x="246" y="542" style="fill:#a4a4a4">Draw a straight line by holding down Shift, Change a brush size by holding down Ctrl, Alt, and dragging</text>

<!-- Taskbar -->
<rect y="547" width="1024" height="29" fill="#15130d"/>
<g filter="url(#bl2)"><ellipse cx="460" cy="572" rx="60" ry="10" fill="#2a1f10"/><ellipse cx="590" cy="566" rx="70" ry="12" fill="#2c2510"/><ellipse cx="720" cy="565" rx="60" ry="12" fill="#2c1a0c"/><ellipse cx="840" cy="570" rx="50" ry="10" fill="#1c3018"/><ellipse cx="860" cy="558" rx="14" ry="10" fill="#223220"/><ellipse cx="400" cy="560" rx="26" ry="10" fill="#241c0e"/></g>
<circle cx="20" cy="561" r="14" fill="url(#orb)"/><rect x="13.500" y="555" width="6" height="6" fill="#d8603a"/><rect x="20.500" y="554" width="6" height="6" fill="#8cba30"/><rect x="13.500" y="562" width="6" height="6" fill="#4aa0e0"/><rect x="20.500" y="561" width="6" height="6" fill="#e8b830"/>
<path d="M68 552l11 8 0 2-11 8z" fill="#7a48d8"/><path d="M79 561l10-9v18z" fill="#b8a0f0"/>
<ellipse cx="125" cy="561" rx="9" ry="9" fill="none" stroke="#2d8fdc" stroke-width="4"/><path d="M117 561h16" stroke="#2d8fdc" stroke-width="3"/><path d="M116 574c-1-3 2-6 4-9 5-8 11-13 17-14" fill="none" stroke="#c8a030" stroke-width="2"/>
<circle cx="172" cy="561" r="12" fill="#83b82c"/><circle cx="171" cy="562" r="5.500" fill="#eef3e0"/><circle cx="171" cy="562" r="2.800" fill="#83b82c"/><path d="M177 549l-3 7M182 554l-5 4" stroke="#e0703a" stroke-width="2"/>
<rect x="196.500" y="547.500" width="43" height="28" fill="url(#tb)" stroke="#5c584e"/>
<rect x="243.500" y="547.500" width="42" height="28" fill="url(#tb)" stroke="#aaa"/>
<rect x="289.500" y="547.500" width="43" height="28" fill="url(#tb)" stroke="#5c584e"/>
<rect x="336.500" y="547.500" width="42" height="28" fill="url(#tb)" stroke="#5c584e"/>
<circle cx="218" cy="561" r="11" fill="#db4437"/><path d="M218 561L227.500 555.500A11 11 0 0 1 218 572z" fill="#fbbc05"/><path d="M218 561v11A11 11 0 0 1 208.500 555.500z" fill="#2f9e44"/><circle cx="218" cy="561" r="5.500" fill="#fff"/><circle cx="218" cy="561" r="4.300" fill="#4285f4"/>
<rect x="253" y="549" width="24" height="24" rx="5" fill="#f2f2f2"/><ellipse cx="265" cy="561" rx="7" ry="8" fill="#e8502a"/><path d="M265 553a7 8 0 0 1 7 8h-7z" fill="#2f9ee8"/><path d="M265 561h7a7 8 0 0 1-7 8z" fill="#4ab84f"/>
<ellipse cx="310" cy="561" rx="11" ry="8" fill="#d8d4c8"/><circle cx="305" cy="559" r="1.800" fill="#e0503a"/><circle cx="309" cy="564" r="1.800" fill="#4aa84f"/><circle cx="311" cy="556" r="1.800" fill="#3a90d8"/><path d="M311 573l8-22" stroke="#c88a30" stroke-width="2.500"/>
<rect x="346" y="549" width="24" height="24" rx="8" fill="#fff"/><path d="M346 558c0 7 1 11 4 14" fill="none" stroke="#1a6cf0" stroke-width="2.500"/><text x="358.500" y="564.500" class="c" style="font-size:8.500px;fill:#1a6cf0;font-weight:bold">Zalo</text>
<text x="922.500" y="563" style="fill:#c4c4c4">EN</text>
<path d="M946 562h6l-3-3.500z" fill="#ddd"/>
<text x="983.500" y="556" class="c" style="fill:#e8e8e8">12:42 PM</text>
<text x="983.500" y="571" class="c" style="fill:#e8e8e8">9/28/2021</text>
<rect x="1013" y="548" width="10" height="28" fill="#2a2a28" stroke="#555" stroke-width=".5"/>
</svg>
</body></html>
